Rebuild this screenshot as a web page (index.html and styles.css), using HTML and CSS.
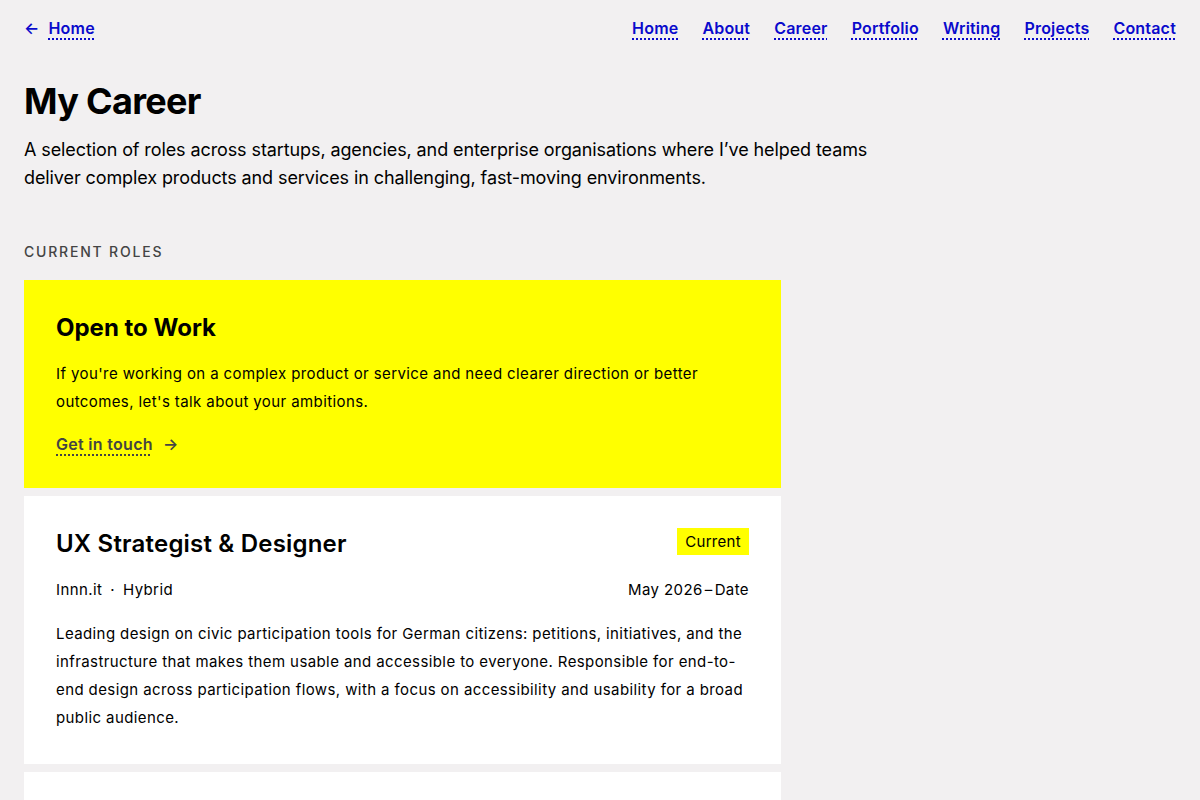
FILE: index.html
```html
<!DOCTYPE html>
<html lang="en">
<head>
<meta charset="utf-8">
<title>My Career</title>
<link rel="stylesheet" href="styles.css">
</head>
<body>
<header class="topbar">
  <a class="back link" href="#"><span class="arrow">←</span><span class="u">Home</span></a>
  <nav class="nav">
    <a class="link u" href="#">Home</a>
    <a class="link u" href="#">About</a>
    <a class="link u" href="#">Career</a>
    <a class="link u" href="#">Portfolio</a>
    <a class="link u" href="#">Writing</a>
    <a class="link u" href="#">Projects</a>
    <a class="link u" href="#">Contact</a>
  </nav>
</header>
<main class="main">
  <h1 class="title">My Career</h1>
  <p class="intro">A selection of roles across startups, agencies, and enterprise organisations where I’ve helped teams deliver complex products and services in challenging, fast-moving environments.</p>
  <h2 class="section-label">CURRENT ROLES</h2>
  <div class="cards">
    <section class="card card-open">
      <h3 class="open-title">Open to Work</h3>
      <p class="open-text">If you're working on a complex product or service and need clearer direction or better outcomes, let's talk about your ambitions.</p>
      <a class="cta" href="#"><span class="cta-text">Get in touch</span><span class="cta-arrow">→</span></a>
    </section>
    <section class="card card-role">
      <div class="role-head">
        <h3 class="role-title">UX Strategist &amp; Designer</h3>
        <span class="badge">Current</span>
      </div>
      <div class="role-meta">
        <span>Innn.it<span class="dot">·</span>Hybrid</span>
        <span>May 2026<span class="dash">–</span>Date</span>
      </div>
      <p class="role-desc">Leading design on civic participation tools for German citizens: petitions, initiatives, and the infrastructure that makes them usable and accessible to everyone. Responsible for end-to-end design across participation flows, with a focus on accessibility and usability for a broad public audience.</p>
    </section>
    <section class="card card-next"></section>
  </div>
</main>
</body>
</html>
```
FILE: styles.css
```css
* { box-sizing: border-box; }
html, body { margin: 0; padding: 0; }
body {
  background: #f2f0f1;
  color: #000;
  font-family: Inter, "Noto Sans", sans-serif;
}
.topbar {
  display: flex;
  justify-content: space-between;
  align-items: center;
  padding: 8px 24px 0 24px;
  height: 40px;
  box-sizing: content-box;
}
.link {
  color: #0a0acc;
  font-weight: 600;
  font-size: 16px;
  letter-spacing: 0.2px;
  text-decoration: none;
}
.u {
  text-decoration: underline dotted;
  text-decoration-thickness: 2px;
  text-underline-offset: 4px;
}
.back { display: flex; align-items: center; gap: 9px; }
.arrow { font-size: 16px; }
.nav { display: flex; gap: 24px; }
.main { padding: 0 24px; }
.title {
  font-size: 36px;
  font-weight: 700;
  margin: 29px 0 0;
  line-height: 48px;
  letter-spacing: -0.7px;
}
.intro {
  font-size: 18px;
  line-height: 28px;
  letter-spacing: -0.1px;
  max-width: 860px;
  margin: 11px 0 0;
}
.section-label {
  font-size: 14px;
  font-weight: 500;
  letter-spacing: 1.8px;
  color: #444;
  margin: 50px 0 0;
  line-height: 20px;
}
.cards {
  display: flex;
  flex-direction: column;
  gap: 8px;
  width: 757px;
  margin-top: 18px;
}
.card {
  background: #fff;
  padding: 32px;
  letter-spacing: 0.4px;
}
.card-open { background: #ffff00; padding: 32px 32px 30px; }
.open-title {
  font-size: 24px;
  font-weight: 700;
  margin: 0;
  line-height: 32px;
  letter-spacing: 0;
}
.open-text {
  font-size: 15px;
  line-height: 28px;
  margin: 16px 0 0;
}
.cta {
  display: inline-flex;
  gap: 10px;
  margin-top: 14px;
  color: #444;
  font-size: 16px;
  font-weight: 600;
  letter-spacing: 0.3px;
  text-decoration: none;
  line-height: 28px;
}
.cta-text {
  text-decoration: underline dotted;
  text-decoration-thickness: 2px;
  text-underline-offset: 4px;
}
.card-role { padding: 32px 32px 32px; }
.role-head {
  display: flex;
  justify-content: space-between;
  align-items: flex-start;
  height: 32px;
}
.role-title {
  font-size: 24px;
  font-weight: 600;
  letter-spacing: 0.2px;
  margin: 0;
  line-height: 32px;
}
.badge {
  background: #ffff00;
  font-size: 15px;
  padding: 0 8px;
  line-height: 27px;
  letter-spacing: 0.3px;
}
.role-meta {
  display: flex;
  justify-content: space-between;
  font-size: 15px;
  line-height: 22px;
  margin-top: 19px;
}
.dot { margin: 0 8px; }
.dash { margin: 0 2px; }
.role-desc {
  font-size: 15px;
  line-height: 28px;
  margin: 19px 0 0;
}
.card-next { height: 60px; }
```
